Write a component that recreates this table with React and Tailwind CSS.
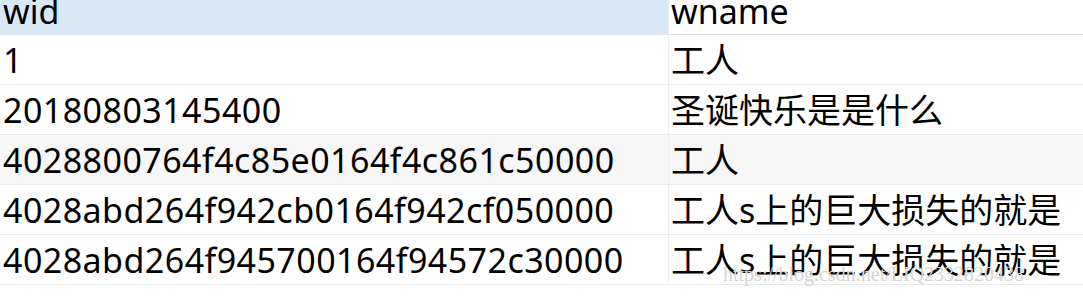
export default function App() {
  const rows = [
    ["1", "工人"],
    ["20180803145400", "圣诞快乐是是什么"],
    ["4028800764f4c85e0164f4c861c50000", "工人"],
    ["4028abd264f942cb0164f942cf050000", "工人s上的巨大损失的就是"],
    ["4028abd264f945700164f94572c30000", "工人s上的巨大损失的就是"],
  ];
  const font = { fontFamily: '"Noto Sans", "Noto Sans CJK SC", sans-serif' };
  return (
    <div className="relative w-[1083px] h-[298px] bg-white overflow-hidden text-black text-[34px] leading-none" style={font}>
      <div className="flex h-[35px] border-b border-[#e3e3e3]">
        <div className="w-[669px] shrink-0 bg-[#d9e8f6] border-r border-[#e8e8e8] pl-[3px] flex items-end pb-[6px]">wid</div>
        <div className="flex-1 pl-[2px] flex items-end pb-[6px]">wname</div>
      </div>
      {rows.map((r, i) => (
        <div key={i} className={`flex h-[50px] border-b border-[#eaeaea] ${i === 2 ? "bg-[#f7f7f7]" : "bg-white"}`}>
          <div className="w-[669px] shrink-0 border-r border-[#eeeeee] pl-[3px] flex items-center tracking-[0.45px]">{r[0]}</div>
          <div className="flex-1 pl-[2px] flex items-center">{r[1]}</div>
        </div>
      ))}
      <div className="absolute left-[723px] top-[264px] text-[20px] text-[#d6d6d6] leading-none" style={{ fontFamily: '"Liberation Serif", serif' }}>
        https://blog.csdn.net/LIQ2332820438
      </div>
    </div>
  );
}
